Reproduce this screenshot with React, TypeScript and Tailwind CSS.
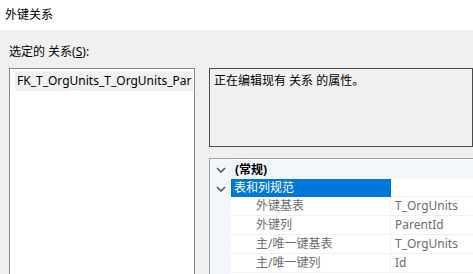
import React from 'react';

const font = { fontFamily: '"Microsoft YaHei UI", "Noto Sans", "Noto Sans CJK SC", sans-serif' };

function Chevron() {
  return (
    <svg width="10" height="6" viewBox="0 0 10 6" className="block">
      <path d="M1 1 L5 5 L9 1" fill="none" stroke="#555" strokeWidth="1.6" />
    </svg>
  );
}

const rows = [
  { label: '外键基表', value: 'T_OrgUnits' },
  { label: '外键列', value: 'ParentId' },
  { label: '主/唯一键基表', value: 'T_OrgUnits' },
  { label: '主/唯一键列', value: 'Id' },
];

export default function App() {
  return (
    <div className="w-[473px] h-[274px] overflow-hidden bg-[#f0f0f0] text-[12px] text-black" style={font}>
      <div className="h-[30px] bg-white flex items-center pl-[5px]">外键关系</div>
      <div className="pt-[14px] pl-[9px] h-[38px] leading-[16px]">
        选定的 关系(<span className="underline">S</span>):
      </div>
      <div className="flex gap-[14px] pl-[9px]">
        <div className="w-[186px] h-[220px] shrink-0 bg-white border border-[#828790] pt-[2px] pl-[5px] pr-[1px]">
          <div className="h-[20px] bg-[#f0f0f0] pl-[2px] leading-[20px] whitespace-nowrap overflow-hidden">
            FK_T_OrgUnits_T_OrgUnits_Par
          </div>
        </div>
        <div className="flex-1 flex flex-col gap-[11px]">
          <div className="h-[79px] border border-[#4a4a4a] bg-[#f0f0f0] pl-[4px] pt-[3px] leading-[18px] whitespace-nowrap">
            正在编辑现有 关系 的属性。
          </div>
          <div className="h-[120px] border border-[#a0a0a0] border-r-0 bg-white flex">
            <div className="w-[21px] shrink-0 bg-[#f3f6fa] flex flex-col pt-[1px]">
              <div className="h-[19px] flex items-center justify-center"><Chevron /></div>
              <div className="h-[19px] flex items-center justify-center"><Chevron /></div>
            </div>
            <div className="flex-1 flex flex-col pt-[1px]">
              <div className="h-[19px] flex items-center font-bold pl-[4px] bg-[#f3f6fa]">(常规)</div>
              <div className="h-[18px] flex">
                <div className="w-[160px] bg-[#0078d7] text-white pl-[3px] leading-[18px]">表和列规范</div>
                <div className="flex-1 bg-white border-b border-[#f0f0f0]"></div>
              </div>
              {rows.map((r) => (
                <div key={r.label} className="h-[19px] flex border-b border-[#f0f0f0] text-[#6d6d6d]">
                  <div className="w-[160px] pl-[25px] leading-[18px] border-r border-[#f0f0f0] whitespace-nowrap">{r.label}</div>
                  <div className="flex-1 pl-[4px] leading-[18px] whitespace-nowrap">{r.value}</div>
                </div>
              ))}
            </div>
          </div>
        </div>
      </div>
    </div>
  );
}
